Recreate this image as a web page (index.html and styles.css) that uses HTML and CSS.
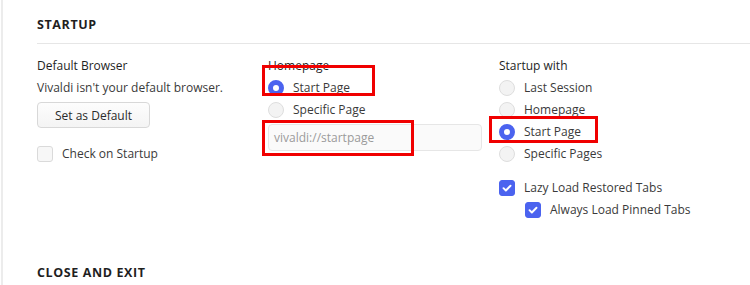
FILE: index.html
```html
<!DOCTYPE html>
<html>
<head>
<meta charset="utf-8">
<link rel="stylesheet" href="styles.css">
</head>
<body>
<div class="page">
  <section class="section">
    <h2 class="section-title">Startup</h2>
    <div class="columns">
      <div class="col">
        <div class="col-title">Default Browser</div>
        <div class="text">Vivaldi isn't your default browser.</div>
        <button class="btn">Set as Default</button>
        <label class="check-row first-check"><span class="box"></span>Check on Startup</label>
      </div>
      <div class="col">
        <div class="col-title">Homepage</div>
        <label class="radio-row"><span class="radio on"></span>Start Page</label>
        <label class="radio-row"><span class="radio"></span>Specific Page</label>
        <div class="input">vivaldi://startpage</div>
        <span class="mark mark-home"></span>
        <span class="mark mark-input"></span>
      </div>
      <div class="col">
        <div class="col-title">Startup with</div>
        <label class="radio-row"><span class="radio"></span>Last Session</label>
        <label class="radio-row"><span class="radio"></span>Homepage</label>
        <label class="radio-row"><span class="radio on"></span>Start Page</label>
        <label class="radio-row"><span class="radio"></span>Specific Pages</label>
        <label class="check-row lazy"><span class="box on"><svg viewBox="0 0 16 16" width="16" height="16"><path d="M4 8.2l2.7 2.7L12 5.4" fill="none" stroke="#fff" stroke-width="2.2" stroke-linecap="round" stroke-linejoin="round"/></svg></span>Lazy Load Restored Tabs</label>
        <label class="check-row indent"><span class="box on"><svg viewBox="0 0 16 16" width="16" height="16"><path d="M4 8.2l2.7 2.7L12 5.4" fill="none" stroke="#fff" stroke-width="2.2" stroke-linecap="round" stroke-linejoin="round"/></svg></span>Always Load Pinned Tabs</label>
        <span class="mark mark-start"></span>
      </div>
    </div>
  </section>
  <section class="section">
    <h2 class="section-title next">Close and Exit</h2>
  </section>
</div>
</body>
</html>
```
FILE: styles.css
```css
html, body {
  margin: 0;
  padding: 0;
  background: #fff;
}
body {
  font-family: "Open Sans", "Noto Sans", sans-serif;
  font-size: 12px;
  color: #2b2b2b;
  width: 750px;
  height: 285px;
  overflow: hidden;
}
.page {
  margin-left: 1px;
  border-left: 2px solid #ececec;
  height: 285px;
  padding-left: 34px;
}
.section-title {
  margin: 0;
  padding-top: 14px;
  padding-bottom: 7px;
  line-height: 22px;
  font-size: 12.5px;
  font-weight: 700;
  letter-spacing: 0.6px;
  text-transform: uppercase;
  color: #1f1f1f;
  border-bottom: 1px solid #e6e6e6;
}
.section-title.next {
  border-bottom: none;
  padding-top: 0;
  margin-top: 0;
}
.columns {
  display: grid;
  grid-template-columns: 231px 231px 1fr;
  margin-top: 11px;
  height: 207px;
}
.col {
  position: relative;
  display: flex;
  flex-direction: column;
  align-items: flex-start;
}
.col-title {
  line-height: 22px;
  font-weight: 400;
  color: #1f1f1f;
}
.text {
  line-height: 22px;
  color: #3a3a3a;
}
.btn {
  margin-top: 3px;
  height: 26px;
  width: 113px;
  border: 1px solid #d8d8d8;
  border-radius: 4px;
  background: linear-gradient(#fdfdfd, #f4f4f4);
  font-family: inherit;
  font-size: 12px;
  color: #2b2b2b;
  padding: 0;
}
.check-row, .radio-row {
  display: flex;
  align-items: center;
  line-height: 22px;
  height: 22px;
  color: #3a3a3a;
}
.first-check {
  margin-top: 15px;
}
.lazy {
  margin-top: 12px;
}
.indent {
  margin-left: 26px;
}
.box {
  width: 14px;
  height: 14px;
  border: 1px solid #dadada;
  border-radius: 3px;
  background: #f7f7f7;
  margin-right: 9px;
  display: flex;
  align-items: center;
  justify-content: center;
}
.box.on {
  background: #4b63ef;
  border-color: #4b63ef;
}
.radio {
  box-sizing: border-box;
  width: 16px;
  height: 16px;
  border-radius: 50%;
  border: 1px solid #dedede;
  background: #f3f3f3;
  margin-right: 9px;
}
.radio.on {
  border: 5px solid #4b63ef;
  background: #fff;
}
.input {
  margin-top: 3px;
  box-sizing: border-box;
  width: 214px;
  height: 27px;
  border: 1px solid #e6e6e6;
  border-radius: 4px;
  background: #fafafa;
  color: #9a9a9a;
  line-height: 25px;
  padding-left: 5px;
}
.mark {
  position: absolute;
  border: 3px solid #f00000;
  box-sizing: border-box;
}
.mark-home {
  left: -6px;
  top: 10px;
  width: 113px;
  height: 31px;
}
.mark-input {
  left: -6px;
  top: 65px;
  width: 152px;
  height: 36px;
}
.mark-start {
  left: -10px;
  top: 61px;
  width: 109px;
  height: 27px;
}
```
